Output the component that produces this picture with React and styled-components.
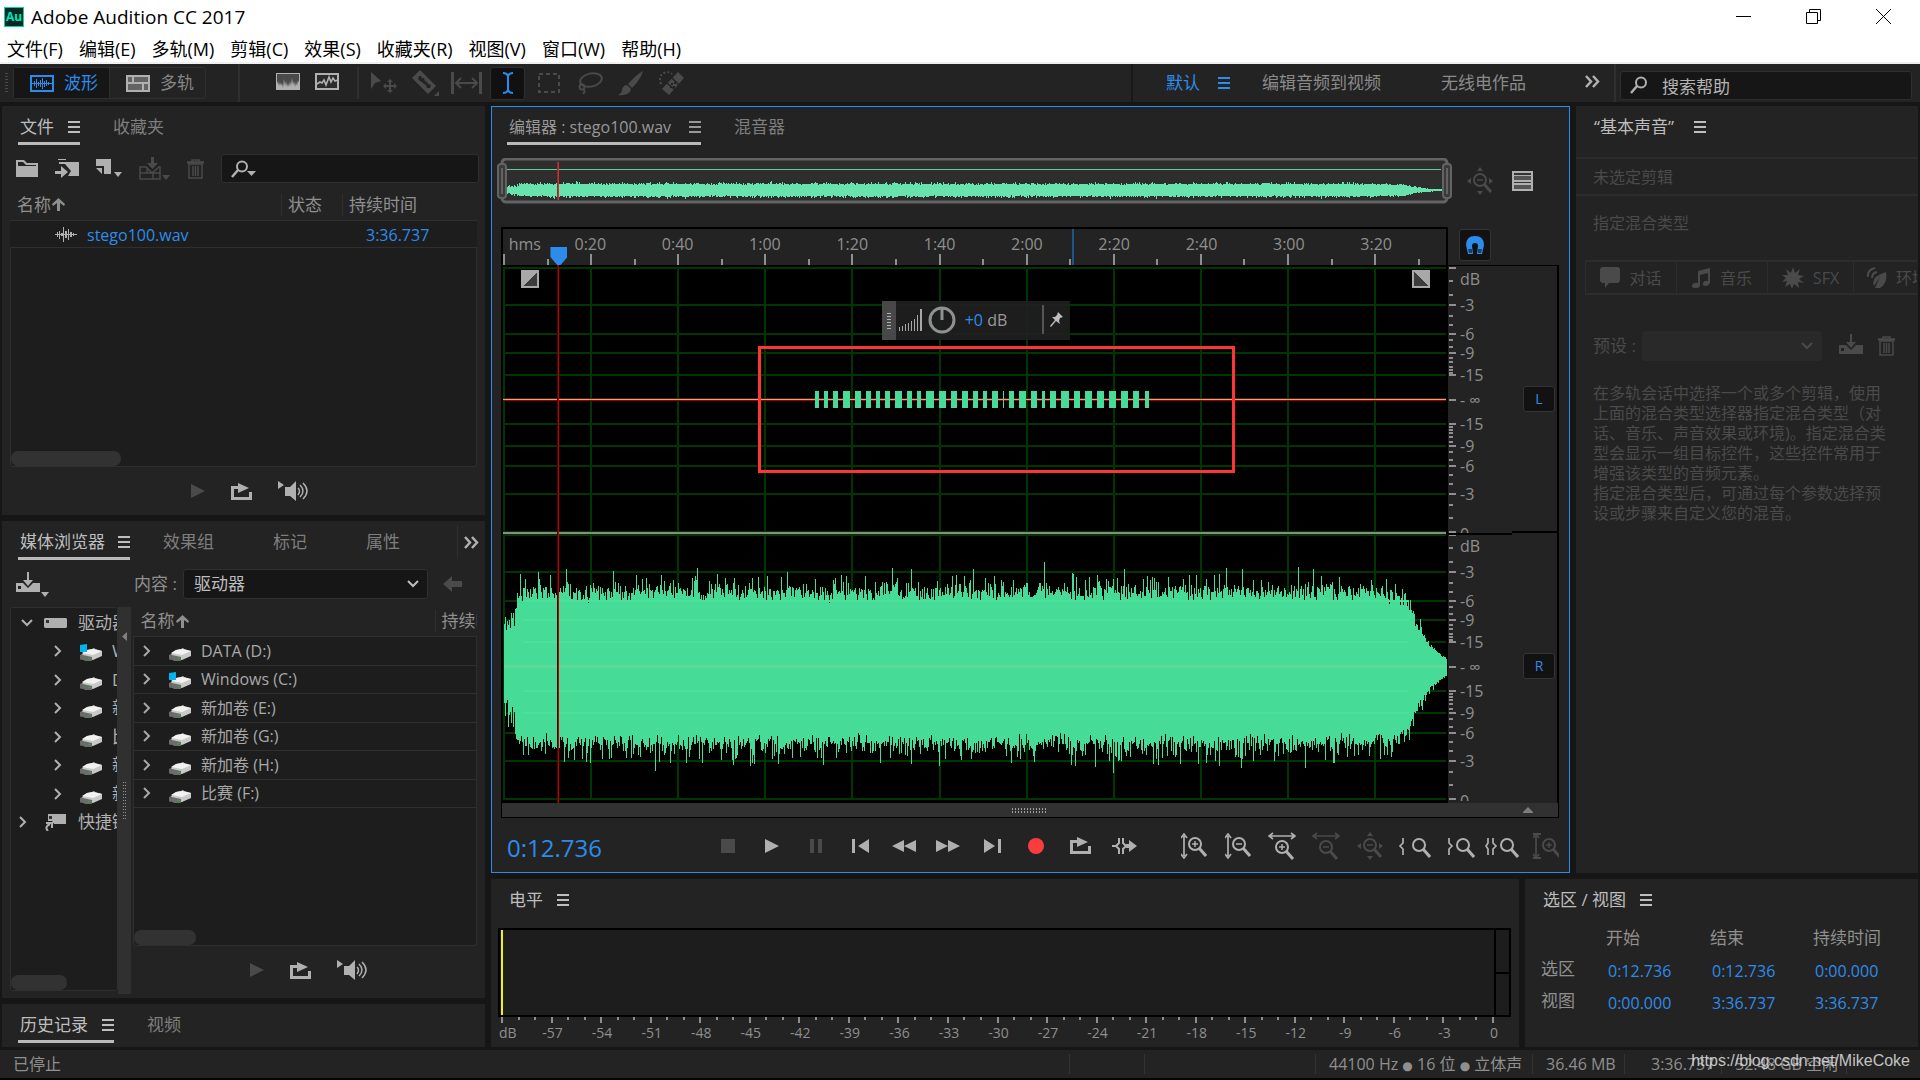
import React from "react";
import styled, { createGlobalStyle } from "styled-components";

const colors = {
  page: "#161616",
  panel: "#232323",
  well: "#1d1d1d",
  field: "#161616",
  line: "#2f2f2f",
  blue: "#2d8ceb",
  bright: "#bebebe",
  text: "#8f8f8f",
  icon: "#b0b0b0",
  off: "#4a4a4a",
  wave: "#46dc98",
  grid: "#003600",
};

const GlobalStyle = createGlobalStyle`
  * {
    box-sizing: border-box;
  }
  body {
    margin: 0;
    background: ${colors.page};
    font-family: "Open Sans", "Noto Sans CJK SC", sans-serif;
    font-size: 16px;
    line-height: 20px;
    color: ${colors.text};
  }
  button, input, select {
    font: inherit;
    color: inherit;
    border: none;
    background: none;
    padding: 0;
    margin: 0;
    outline: none;
  }
  svg {
    display: block;
    flex: none;
  }
`;

/* ---------- drawings ---------- */

const Icon = ({ w, h, children, color = "currentColor" }) => (
  <svg width={w} height={h} viewBox={`0 0 ${w} ${h}`} fill={color} aria-hidden="true">
    {children}
  </svg>
);

const MenuIcon = () => (
  <Icon w={12} h={12}>
    <path d="M0 0h12v2H0zM0 5h12v2H0zM0 10h12v2H0z" />
  </Icon>
);

const ChevronDown = () => (
  <Icon w={12} h={8}>
    <path d="M1 1l5 5 5-5" fill="none" stroke="currentColor" strokeWidth="2" />
  </Icon>
);

const ChevronRight = () => (
  <Icon w={8} h={12}>
    <path d="M1 1l5 5-5 5" fill="none" stroke="currentColor" strokeWidth="2" />
  </Icon>
);

const DoubleChevron = () => (
  <Icon w={15} h={13}>
    <path d="M1 1l5 5.500-5 5.500M8 1l5 5.500-5 5.500" fill="none" stroke="#b0b0b0" strokeWidth="2.500" />
  </Icon>
);

const WaveformIcon = () => (
  <Icon w={24} h={17}>
    <path d="M1 1h22v15H1z" fill="none" stroke="currentColor" strokeWidth="2" />
    <path d="M2 8h20v1H2zM4 6h1v5H4zM6 4h1v9H6zM8 7h1v4H8zM10 5h1v7h-1zM12 3h1v11h-1zM14 6h1v6h-1zM16 5h1v6h-1zM18 7h1v3h-1z" />
  </Icon>
);

const MultitrackIcon = () => (
  <Icon w={24} h={17}>
    <path d="M0 0h24v17H0z" fill="#b0b0b0" />
    <path d="M2 2h4v5H2zM8 2h14v5H8zM2 9h14v6H2zM18 9h4v6h-4z" fill="#636363" />
  </Icon>
);

const SpectralIcon = () => (
  <Icon w={24} h={17}>
    <path d="M0 0h24v17H0z" fill="#b0b0b0" />
    <path d="M1 1h22v9l-1-3-1 6-1-4-1 5-1-6-1 4-1-7-1 8-1-5-1 6-1-4-1 4-1-6-1 5-1-7-1 9-1-5-1 3-1-4-1 4-1-5-1 3z" fill="#4a4a4a" />
  </Icon>
);

const PitchIcon = () => (
  <Icon w={24} h={17}>
    <path d="M1 1h22v15H1z" fill="#2c2c2c" stroke="#b0b0b0" strokeWidth="2" />
    <path d="M2 11l3-2 2 1 2-3 2 5 3-8 2 5 2-4 2 3 3-1" fill="none" stroke="#b0b0b0" strokeWidth="1.600" />
  </Icon>
);

const MoveIcon = () => (
  <Icon w={27} h={22}>
    <path d="M0 0l10 9-6 2-4 6z" />
    <path d="M19 7l3 3h-2v3h3v-2l3 3-3 3v-2h-3v3h2l-3 3-3-3h2v-3h-3v2l-3-3 3-3v2h3v-3h-2z" />
  </Icon>
);

const RazorIcon = () => (
  <Icon w={28} h={27}>
    <path d="M8 0l16 16-8 8L0 8z" />
    <path d="M7 6l2 0 1 2 2 0 1 3 2 1 1 2 3 1-1 3-3 0-1-3-2-1-2-2-2-1-2-2z" fill={colors.panel} />
    <path d="M27 21v5h-5z" />
  </Icon>
);

const SlipIcon = () => (
  <Icon w={31} h={22}>
    <path d="M0 0h3v22H0zM28 0h3v22h-3z" />
    <path d="M6 11h19M10 6l-5 5 5 5M21 6l5 5-5 5" fill="none" stroke="currentColor" strokeWidth="2" />
  </Icon>
);

const IBeamIcon = () => (
  <Icon w={12} h={22}>
    <path d="M1 1q4 0 5 3 1-3 5-3M6 4v14M1 21q4 0 5-3 1 3 5 3" fill="none" stroke="currentColor" strokeWidth="2" />
  </Icon>
);

const MarqueeIcon = () => (
  <Icon w={22} h={20}>
    <path d="M1 1h20v18H1z" fill="none" stroke="currentColor" strokeWidth="2" strokeDasharray="4 3" />
  </Icon>
);

const LassoIcon = () => (
  <Icon w={26} h={22}>
    <g fill="none" stroke="currentColor" strokeWidth="2">
      <ellipse cx="14" cy="8" rx="11" ry="6.500" transform="rotate(-12 14 8)" />
      <circle cx="5" cy="15" r="2.500" />
      <path d="M6 17q3 2 0 5" />
    </g>
  </Icon>
);

const BrushIcon = () => (
  <Icon w={25} h={25}>
    <path d="M25 0q-2 8-11 17l-4-4Q19 3 25 0zM9 14l4 4q-1 7-13 6 4-2 4-5 1-5 5-5z" />
  </Icon>
);

const HealIcon = () => (
  <Icon w={26} h={25}>
    <path d="M19 1l6 6-15 17-7-6z" />
    <path d="M8 12l8 7M13 7l7 7" stroke={colors.panel} strokeWidth="1.500" />
    <path d="M12 12h2v2h-2zM14 15h2v2h-2zM15 11h2v2h-2zM11 15h2v2h-2z" fill={colors.panel} />
    <path d="M2 13Q-1 5 5 2q5-2 8 1" fill="none" stroke="currentColor" strokeWidth="2" strokeDasharray="2 2" />
  </Icon>
);

const SearchIcon = ({ arrow }) => (
  <Icon w={arrow ? 25 : 18} h={18}>
    <circle cx="11" cy="6.500" r="5" fill="none" stroke={colors.icon} strokeWidth="2" />
    <path d="M7 10l-6 7" stroke={colors.icon} strokeWidth="2.500" />
    {arrow && <path d="M16 11h9l-4.500 5z" fill={colors.icon} />}
  </Icon>
);

const FolderIcon = () => (
  <Icon w={22} h={17}>
    <path d="M0 0h8l3 3h11v14H0zM2 2v4h18V5H10L7 2z" fillRule="evenodd" />
  </Icon>
);

const ImportIcon = () => (
  <Icon w={24} h={19}>
    <path d="M3 0h8v1H3zM4 3h20v14H13l3-5-6-7H4z" />
    <path d="M0 12h6V7l7 6-7 6v-4H0z" />
  </Icon>
);

const NewFileIcon = () => (
  <Icon w={26} h={19}>
    <path d="M0 0h15v15H8V7H0zM0 9h6v6z" />
    <path d="M18 13h8l-4 5z" />
  </Icon>
);

const InsertIcon = () => (
  <Icon w={31} h={24}>
    <path d="M12 0h3v6h4l-5.500 6L8 6h4z" />
    <path d="M1 10h6l6 6 7-6h1v12H1zM1 16h20M8 10v6M14 16v6" fill="none" stroke="currentColor" strokeWidth="1.500" />
    <path d="M23 18h8l-4 5z" />
  </Icon>
);

const TrashIcon = () => (
  <Icon w={17} h={20}>
    <path d="M0 3h17v1H0zM5 3V1h7v2" fill="none" stroke="currentColor" strokeWidth="1.500" />
    <path d="M2 5h13v14H2zM6 7v10M8.500 7v10M11 7v10" fill="none" stroke="currentColor" strokeWidth="1.500" />
  </Icon>
);

const SortArrow = () => (
  <Icon w={13} h={13}>
    <path d="M6.500 0L13 6l-1 2-4-3v8H5V5L1 8 0 6z" />
  </Icon>
);

const ClipIcon = () => (
  <Icon w={22} h={17}>
    <path d="M0 8h22v1H0zM2 6h1v5H2zM4 5h1v8H4zM6 7h2v3H6zM8 1h1v15H8zM10 5h2v7h-2zM13 3h1v11h-1zM15 6h2v5h-2zM18 7h1v3h-1z" />
  </Icon>
);

const PlayIcon = () => (
  <Icon w={14} h={14}>
    <path d="M0 0l14 7-14 7z" />
  </Icon>
);

const LoopIcon = () => (
  <Icon w={21} h={17}>
    <path d="M0 3h7V0l11 5-11 5V6H3v8h15V9h3v8H0z" />
  </Icon>
);

const SpeakerIcon = () => (
  <Icon w={31} h={20}>
    <path d="M0 0l6 4-6 4zM7 6h5l6-6v20l-6-5H7z" />
    <path d="M20 7q3 3 0 7M22 4q6 6 0 12M25 2q8 8 0 16" fill="none" stroke="currentColor" strokeWidth="1.500" />
  </Icon>
);

const DriveArrowIcon = ({ arrow }) => (
  <Icon w={arrow ? 33 : 24} h={25}>
    <path d="M0 11h7l5 5 5-5h7v9H0z" />
    <path d="M11 0h2v8h4l-5 6-5-6h4z" />
    <path d="M2 14h3v3H2z" fill={colors.panel} />
    {arrow && <path d="M25 20h8l-4 5z" />}
  </Icon>
);

const BackArrow = () => (
  <Icon w={19} h={16}>
    <path d="M0 8l9-8v5h10v6H9v5z" />
  </Icon>
);

const HardDriveIcon = ({ system }) => (
  <Icon w={22} h={20}>
    <path d="M0 14l6-3v7l-5 1-1-1z" fill="#6a6a6a" />
    <path d="M2 13l5-4 5-1 2-1 1 1 7 2v5l-9 4-7-1z" fill="#c9c9c9" />
    <path d="M2 12l5-3 6-1 9 2-9 4z" fill="#f2f2f2" />
    <path d="M3 14l9 2v4H5l-3-2z" fill="#6c6c6c" />
    <path d="M8 17h3v1H8z" fill="#38a338" />
    {system && <path d="M0 4l7-1v8H0z" fill="#00b4f0" />}
  </Icon>
);

const DriveRootIcon = () => (
  <Icon w={23} h={10}>
    <path d="M1 0h21l1 1v8l-1 1H1L0 9V1z" fill={colors.icon} />
    <path d="M2 2h3v3H2z" fill="#333" />
  </Icon>
);

const ShortcutIcon = () => (
  <Icon w={23} h={17}>
    <path d="M3 0h18v10H9L7 7H3z" fill={colors.icon} />
    <path d="M4 2h3v3H4z" fill="#333" />
    <path d="M3 17q-4-4 2-7M1 9h6v5" fill="none" stroke={colors.icon} strokeWidth="2" />
  </Icon>
);

const Lens = ({ x, y, sign }) => (
  <g fill="none" stroke="currentColor">
    <circle cx={x} cy={y} r="6" strokeWidth="2" />
    <path d={`M${x + 4} ${y + 4}l7 8`} strokeWidth="3" />
    {sign && <path d={`M${x - 3} ${y}h6`} strokeWidth="1.500" />}
    {sign === "+" && <path d={`M${x} ${y - 3}v6`} strokeWidth="1.500" />}
  </g>
);

const ZoomVertical = ({ sign, bars }) => (
  <Icon w={26} h={26}>
    <path d="M3 3v20M0 5l3-4 3 4M0 21l3 4 3-4" fill="none" stroke="currentColor" strokeWidth="1.700" />
    {bars && <path d="M0 1h8M0 25h8" stroke="currentColor" strokeWidth="2" />}
    <Lens x={bars ? 16 : 14} y={bars ? 12 : 11} sign={sign} />
  </Icon>
);

const ZoomHorizontal = ({ sign }) => (
  <Icon w={28} h={28}>
    <path d="M1 4h26M5 1L1 4l4 3M23 1l4 3-4 3" fill="none" stroke="currentColor" strokeWidth="1.700" />
    <Lens x={14} y={15} sign={sign} />
  </Icon>
);

const ZoomFull = () => (
  <Icon w={26} h={28}>
    <path d="M10 4l3-4 3 4zM10 24l3 4 3-4zM4 11v6l-4-3zM22 11v6l4-3z" />
    <Lens x={13} y={13} sign="-" />
  </Icon>
);

const ZoomEdge = ({ left, right }) => (
  <Icon w={34} h={24}>
    {left && <path d={right ? "M3 4v5l-2 3 2 3v6" : "M6 4v5l-3 3 3 3v6"} fill="none" stroke="currentColor" strokeWidth="1.700" />}
    {right && <path d="M8 4v5l3 3-3 3v6" fill="none" stroke="currentColor" strokeWidth="1.700" />}
    <Lens x={22} y={11} />
  </Icon>
);

const ListIcon = () => (
  <Icon w={21} h={20} color={colors.icon}>
    <path d="M0 0h21v20H0z" />
    <path d="M2 2h17v2H2zM2 11h17v1H2z" fill="#333" />
    <path d="M2 5h17v4H2zM2 14h17v4H2z" fill="#555" />
  </Icon>
);

const MagnetIcon = () => (
  <Icon w={18} h={19}>
    <path d="M2 18L0 9q0-9 9-9t9 9l-2 9h-5l1-8q0-3-3-3T6 10l1 8z" />
    <path d="M2 13h4v4H3zM12 13h4l-1 4h-3z" fill="#17406b" />
  </Icon>
);

const stopShape = <Icon w={14} h={14}><path d="M0 0h14v14H0z" /></Icon>;
const pauseShape = <Icon w={12} h={14}><path d="M0 0h4v14H0zM8 0h4v14H8z" /></Icon>;
const toStartShape = <Icon w={17} h={14}><path d="M0 0h3v14H0zM17 0v14L6 7z" /></Icon>;
const toEndShape = <Icon w={17} h={14}><path d="M14 0h3v14h-3zM0 0v14l11-7z" /></Icon>;
const rewindShape = <Icon w={24} h={12}><path d="M12 0v12L0 6zM24 0v12L12 6z" /></Icon>;
const forwardShape = <Icon w={24} h={12}><path d="M12 0v12l12-6zM0 0v12l12-6z" /></Icon>;
const recordShape = <Icon w={16} h={16} color="#f93d3d"><circle cx="8" cy="8" r="8" /></Icon>;
const skipShape = (
  <Icon w={25} h={16}>
    <path d="M7 0v5L4 8l3 3v5M11 0v5l3 3-3 3v5M0 8h5" fill="none" stroke="currentColor" strokeWidth="2" />
    <path d="M14 6h3V2l8 6-8 6v-4h-3z" />
  </Icon>
);

/* ---------- shared parts ---------- */

const Panel = styled.section`
  display: flex;
  flex-direction: column;
  background: ${colors.panel};
  min-width: 0;
  overflow: hidden;
  flex: ${(p) => p.$flex || "none"};
  width: ${(p) => p.$width || "auto"};
  height: ${(p) => p.$height || "auto"};
  outline: ${(p) => (p.$focused ? `1px solid ${colors.blue}` : "none")};
  outline-offset: -1px;
`;

const TabRow = styled.div`
  display: flex;
  flex: none;
  height: 39px;
  padding-left: 16px;
  gap: 31px;
`;

const TabButton = styled.button`
  display: flex;
  align-items: center;
  gap: ${(p) => p.$gap || "14px"};
  height: 39px;
  padding: 6px 0 0 2px;
  padding-right: ${(p) => (p.$active ? "0" : "26px")};
  font-size: ${(p) => p.$size || "17px"};
  white-space: nowrap;
  color: ${(p) => (p.$active ? p.$color || colors.bright : "#7e7e7e")};
  border-bottom: 3px solid ${(p) => (p.$line ? "#bababa" : "transparent")};
`;

const TabsEnd = styled.button`
  margin-left: auto;
  display: flex;
  align-items: center;
  justify-content: flex-end;
  width: 60px;
  height: 34px;
  margin-top: 4px;
  padding-right: 6px;
  border-left: 1px solid ${colors.line};
`;

const IconButton = styled.button`
  display: flex;
  align-items: center;
  justify-content: center;
  color: ${(p) => (p.$off ? colors.off : colors.icon)};
`;

const Preview = styled.div`
  display: flex;
  align-items: center;
  justify-content: center;
  flex: none;
  gap: 26px;
  height: 48px;
  padding-left: ${(p) => p.$shift || "0"};
`;

const Tab = ({ children, active, line = active, gap }) => (
  <TabButton type="button" $active={active} $line={line} $gap={gap}>
    {children}
    {active && <MenuIcon />}
  </TabButton>
);

const PreviewControls = ({ shift }) => (
  <Preview $shift={shift}>
    <IconButton $off aria-label="播放"><PlayIcon /></IconButton>
    <IconButton aria-label="循环"><LoopIcon /></IconButton>
    <IconButton aria-label="自动播放"><SpeakerIcon /></IconButton>
  </Preview>
);

/* ---------- title, menu and tool bars ---------- */

const TitleBar = styled.header`
  display: flex;
  align-items: center;
  height: 35px;
  padding: 0 16px 2px 4px;
  background: #fff;
  color: #000;
  font-size: 19px;
`;

const Logo = styled.span`
  width: 20px;
  height: 20px;
  margin-right: 7px;
  border: 1px solid #00d8a8;
  background: #052822;
  color: #00e4bb;
  font-size: 12px;
  line-height: 17px;
  font-weight: 700;
  text-align: center;
`;

const WindowButtons = styled.div`
  display: flex;
  gap: 50px;
  margin-left: auto;
  padding-right: 11px;
`;

const WindowButton = styled.button`
  display: flex;
  width: 20px;
  justify-content: center;
`;

const MenuBar = styled.nav`
  display: flex;
  gap: 16px;
  height: 29px;
  padding-left: 7px;
  background: #fff;
  border-bottom: 2px solid #f0f0f0;
`;

const MenuItem = styled.button`
  color: #000;
  font-size: 18px;
  white-space: nowrap;
`;

const ToolBar = styled.div`
  display: flex;
  align-items: center;
  flex: none;
  height: 38px;
  margin-bottom: 4px;
  padding-left: 5px;
  background: ${colors.panel};
`;

const Grip = styled.span`
  width: 3px;
  height: 20px;
  margin-right: 5px;
  background: repeating-linear-gradient(#4a4a4a 0 1px, transparent 1px 3px);
`;

const ModeGroup = styled.div`
  display: flex;
  height: 32px;
  border: 1px solid ${colors.line};
  border-radius: 3px;
`;

const ModeButton = styled.button`
  display: flex;
  align-items: center;
  gap: 10px;
  width: 95px;
  padding-left: 16px;
  font-size: 17px;
  background: ${(p) => (p.$active ? colors.field : "transparent")};
  color: ${(p) => (p.$active ? colors.blue : "#868686")};
`;

const BarLine = styled.span`
  width: ${(p) => p.$width || "2px"};
  height: ${(p) => p.$height || "38px"};
  background: ${(p) => p.$color || "#2f2f2f"};
  margin: ${(p) => p.$margin || "0"};
`;

const ViewToggles = styled.div`
  display: flex;
  gap: 15px;
  padding: 0 18px 4px 36px;
`;

const ToolGroup = styled.div`
  display: flex;
  gap: 6px;
  padding-left: 8px;
`;

const ToolButton = styled.button`
  display: flex;
  align-items: center;
  justify-content: center;
  width: 35px;
  height: 33px;
  border: 1px solid ${(p) => (p.$active ? colors.line : "transparent")};
  border-radius: 3px;
  background: ${(p) => (p.$active ? "#111" : "transparent")};
  color: ${(p) => (p.$active ? colors.blue : colors.off)};
`;

const Workspaces = styled.nav`
  display: flex;
  align-items: center;
  width: 483px;
  height: 38px;
  margin-left: auto;
  padding: 0 14px 0 33px;
  border-left: 2px solid #181818;
`;

const WorkspaceButton = styled.button`
  display: flex;
  align-items: center;
  gap: 18px;
  margin-right: ${(p) => p.$after || "0"};
  font-size: 17px;
  color: ${(p) => (p.$active ? colors.blue : "#8a8a8a")};
`;

const MoreButton = styled.button`
  margin-left: auto;
  padding-bottom: 4px;
`;

const SearchBox = styled.label`
  display: flex;
  align-items: center;
  gap: 14px;
  flex: ${(p) => (p.$width ? "none" : "1")};
  width: ${(p) => p.$width || "auto"};
  min-width: 0;
  height: 29px;
  margin: ${(p) => p.$margin || "0"};
  padding-left: 9px;
  background: ${colors.field};
  border: 1px solid ${colors.line};
  border-radius: 3px;
`;

const SearchInput = styled.input`
  flex: 1;
  min-width: 0;
  padding-top: 3px;
  font-size: 17px;
  &::placeholder {
    color: #b4b4b4;
    opacity: 1;
  }
`;

const menus = ["文件(F)", "编辑(E)", "多轨(M)", "剪辑(C)", "效果(S)", "收藏夹(R)", "视图(V)", "窗口(W)", "帮助(H)"];

const tools = [
  ["移动", <MoveIcon />],
  ["切断", <RazorIcon />],
  ["滑动", <SlipIcon />],
  ["时间选择", <IBeamIcon />],
  ["框选", <MarqueeIcon />],
  ["套索", <LassoIcon />],
  ["画笔", <BrushIcon />],
  ["污点修复", <HealIcon />],
];

const TopBars = () => (
  <>
    <TitleBar>
      <Logo>Au</Logo>
      Adobe Audition CC 2017
      <WindowButtons>
        <WindowButton aria-label="最小化">
          <Icon w={15} h={15}><path d="M0 7h15v1H0z" /></Icon>
        </WindowButton>
        <WindowButton aria-label="还原">
          <Icon w={15} h={15}>
            <path d="M0.500 3.500h11v11h-11zM3.500 3.500v-3h11v11h-3" fill="none" stroke="#000" />
          </Icon>
        </WindowButton>
        <WindowButton aria-label="关闭">
          <Icon w={15} h={15}><path d="M0 0l15 15M15 0L0 15" stroke="#000" /></Icon>
        </WindowButton>
      </WindowButtons>
    </TitleBar>
    <MenuBar>
      {menus.map((m) => <MenuItem key={m}>{m}</MenuItem>)}
    </MenuBar>
    <ToolBar>
      <Grip />
      <ModeGroup>
        <ModeButton $active><WaveformIcon />波形</ModeButton>
        <BarLine $width="1px" $height="30px" />
        <ModeButton><MultitrackIcon />多轨</ModeButton>
      </ModeGroup>
      <BarLine $margin="0 0 0 32px" />
      <ViewToggles>
        <IconButton aria-label="频谱"><SpectralIcon /></IconButton>
        <IconButton aria-label="音高"><PitchIcon /></IconButton>
      </ViewToggles>
      <BarLine $height="32px" />
      <ToolGroup>
        {tools.map(([name, icon], i) => (
          <ToolButton key={name} aria-label={name} $active={i === 3}>{icon}</ToolButton>
        ))}
      </ToolGroup>
      <Workspaces>
        <WorkspaceButton $active $after="32px">默认<MenuIcon /></WorkspaceButton>
        <WorkspaceButton $after="60px">编辑音频到视频</WorkspaceButton>
        <WorkspaceButton>无线电作品</WorkspaceButton>
        <MoreButton aria-label="更多"><DoubleChevron /></MoreButton>
      </Workspaces>
      <BarLine />
      <SearchBox $width="292px" $margin="4px 8px 0 4px">
        <SearchIcon />
        <SearchInput aria-label="搜索帮助" placeholder="搜索帮助" />
      </SearchBox>
    </ToolBar>
  </>
);

/* ---------- left column ---------- */

const LeftColumn = styled.div`
  display: flex;
  flex-direction: column;
  gap: 6px;
  width: 483px;
  flex: none;
`;

const FileTools = styled.div`
  display: flex;
  align-items: center;
  gap: 17px;
  flex: none;
  height: 29px;
  margin: 9px 6px 7px 14px;
`;

const Table = styled.table`
  width: 100%;
  flex: none;
  table-layout: fixed;
  border-collapse: collapse;
`;

const Th = styled.th`
  width: ${(p) => p.$width || "auto"};
  height: ${(p) => p.$height || "29px"};
  padding: 0 0 0 7px;
  text-align: left;
  font-weight: 400;
  font-size: 17px;
  overflow: hidden;
  white-space: nowrap;
  background: linear-gradient(${colors.line}, ${colors.line}) 0 50% / ${(p) => (p.$first ? "0" : "1px")} 22px no-repeat;
`;

const Sorted = styled.span`
  display: flex;
  align-items: center;
  gap: 1px;
`;

const FileList = styled.div`
  display: flex;
  flex-direction: column;
  flex: 1;
  margin: 0 8px;
`;

const Td = styled.td`
  height: 27px;
  padding: 2px 0 0 ${(p) => p.$left};
  background: ${colors.well};
  border-top: 1px solid ${colors.line};
  border-bottom: 1px solid ${colors.line};
  color: ${colors.blue};
`;

const CellLine = styled.span`
  display: flex;
  align-items: center;
  gap: 10px;
  color: ${colors.icon};
`;

const BlueText = styled.span`
  color: ${colors.blue};
`;

const Well = styled.div`
  display: flex;
  align-items: flex-end;
  flex: 1;
  background: ${colors.well};
  border: 1px solid ${colors.line};
  border-top: none;
  border-radius: 0 0 3px 3px;
`;

const Thumb = styled.span`
  width: ${(p) => p.$width};
  height: 15px;
  border-radius: 7px;
  background: #323232;
`;

const MediaTools = styled.div`
  display: flex;
  align-items: center;
  flex: none;
  height: 30px;
  margin: 9px 0 8px;
  padding-left: 14px;
`;

const FieldLabel = styled.label`
  width: ${(p) => p.$width};
  margin-left: ${(p) => p.$left || "0"};
  font-size: 17px;
  white-space: nowrap;
`;

const SelectBox = styled.span`
  display: flex;
  align-items: center;
  width: ${(p) => p.$width};
  height: 30px;
  padding: 0 8px 0 10px;
  margin-right: 15px;
  border: 1px solid ${(p) => (p.$off ? "#292929" : colors.line)};
  border-radius: 3px;
  background: ${(p) => (p.$off ? "#292929" : colors.field)};
  color: ${(p) => (p.$off ? colors.off : colors.bright)};
`;

const Select = styled.select`
  appearance: none;
  flex: 1;
  font-size: 17px;
`;

const MediaBody = styled.div`
  display: flex;
  flex: 1;
  min-height: 0;
  padding-left: 8px;
`;

const TreeBox = styled.div`
  display: flex;
  flex-direction: column;
  width: 108px;
  margin-bottom: 7px;
  overflow: hidden;
  background: ${colors.well};
  border: 1px solid ${colors.line};
  border-radius: 3px;
`;

const TreeRow = styled.div`
  display: flex;
  align-items: center;
  flex: none;
  height: 28px;
  gap: ${(p) => p.$gap || "11px"};
  padding-left: ${(p) => p.$indent || "10px"};
  color: ${colors.icon};
  white-space: nowrap;
  &:nth-child(odd) {
    height: 29px;
  }
`;

const TreeName = styled.span`
  margin-left: ${(p) => p.$pull || "0"};
  font-size: 17px;
`;

const ThumbLine = styled.div`
  display: flex;
  margin-top: auto;
`;

const Splitter = styled.div`
  display: flex;
  flex-direction: column;
  align-items: center;
  width: 13px;
  margin: 0 2px 4px 0;
  padding-top: 25px;
  background: #303030;
  color: #808080;
`;

const SplitGrip = styled.span`
  width: 5px;
  height: 37px;
  margin-top: 141px;
  background: repeating-linear-gradient(90deg, #303030 0 1px, transparent 1px 2px),
    repeating-linear-gradient(#909090 0 1px, transparent 1px 3px);
`;

const DriveColumn = styled.div`
  display: flex;
  flex-direction: column;
  flex: 1;
  min-width: 0;
  padding-bottom: 4px;
`;

const DriveList = styled.div`
  display: flex;
  flex-direction: column;
  flex: 1;
  margin-right: 8px;
`;

const DriveRow = styled.tr`
  height: 28px;
  &:nth-child(odd) {
    height: 29px;
  }
`;

const DriveCell = styled.td`
  padding: 0 0 0 9px;
  background: ${colors.well};
  border: 1px solid ${colors.line};
  color: #a8a8a8;
`;

const DriveLine = styled.span`
  display: flex;
  align-items: center;
  gap: 18px;
`;

const DriveName = styled.span`
  margin-left: -8px;
`;

const drives = [
  ["DATA (D:)"],
  ["Windows (C:)", true],
  ["新加卷 (E:)"],
  ["新加卷 (G:)"],
  ["新加卷 (H:)"],
  ["比赛 (F:)"],
];

const tree = [
  ["Windows (C:)", true],
  ["DATA (D:)"],
  ["新加卷 (E:)"],
  ["比赛 (F:)"],
  ["新加卷 (G:)"],
  ["新加卷 (H:)"],
];

const FilesPanel = () => (
  <Panel $height="409px">
    <TabRow>
      <Tab active>文件</Tab>
      <Tab>收藏夹</Tab>
    </TabRow>
    <FileTools>
      <IconButton aria-label="打开"><FolderIcon /></IconButton>
      <IconButton aria-label="导入"><ImportIcon /></IconButton>
      <IconButton aria-label="新建"><NewFileIcon /></IconButton>
      <IconButton $off aria-label="插入"><InsertIcon /></IconButton>
      <IconButton $off aria-label="删除"><TrashIcon /></IconButton>
      <SearchBox>
        <SearchIcon arrow />
        <SearchInput aria-label="搜索文件" />
      </SearchBox>
    </FileTools>
    <FileList>
      <Table>
        <thead>
          <tr>
            <Th $first $width="271px" $height="30px"><Sorted>名称<SortArrow /></Sorted></Th>
            <Th $width="61px">状态</Th>
            <Th>持续时间</Th>
          </tr>
        </thead>
        <tbody>
          <tr>
            <Td $left="45px"><CellLine><ClipIcon /><BlueText>stego100.wav</BlueText></CellLine></Td>
            <Td $left="0" />
            <Td $left="24px">3:36.737</Td>
          </tr>
        </tbody>
      </Table>
      <Well><Thumb $width="110px" /></Well>
    </FileList>
    <PreviewControls shift="12px" />
  </Panel>
);

const MediaPanel = () => (
  <Panel $flex="1">
    <TabRow>
      <Tab active gap="13px">媒体浏览器</Tab>
      <Tab>效果组</Tab>
      <Tab>标记</Tab>
      <Tab>属性</Tab>
      <TabsEnd aria-label="更多"><DoubleChevron /></TabsEnd>
    </TabRow>
    <MediaTools>
      <IconButton aria-label="添加快捷方式"><DriveArrowIcon arrow /></IconButton>
      <FieldLabel htmlFor="drive-content" $width="49px" $left="85px">内容 :</FieldLabel>
      <SelectBox $width="245px">
        <Select id="drive-content" defaultValue="驱动器">
          <option>驱动器</option>
        </Select>
        <ChevronDown />
      </SelectBox>
      <IconButton $off aria-label="后退"><BackArrow /></IconButton>
    </MediaTools>
    <MediaBody>
      <TreeBox>
        <TreeRow><ChevronDown /><DriveRootIcon /><TreeName>驱动器</TreeName></TreeRow>
        {tree.map(([name, system]) => (
          <TreeRow key={name} $indent="43px" $gap="18px">
            <ChevronRight />
            <HardDriveIcon system={system} />
            <TreeName $pull="-8px">{name}</TreeName>
          </TreeRow>
        ))}
        <TreeRow $indent="8px" $gap="18px">
          <ChevronRight />
          <ShortcutIcon />
          <TreeName $pull="-8px">快捷键</TreeName>
        </TreeRow>
        <ThumbLine><Thumb $width="56px" /></ThumbLine>
      </TreeBox>
      <Splitter>
        <Icon w={5} h={9}><path d="M5 0v9L0 4.500z" /></Icon>
        <SplitGrip />
      </Splitter>
      <DriveColumn>
        <DriveList>
          <Table>
            <thead>
              <tr>
                <Th $first $width="301px"><Sorted>名称<SortArrow /></Sorted></Th>
                <Th>持续时间</Th>
              </tr>
            </thead>
            <tbody>
              {drives.map(([name, system]) => (
                <DriveRow key={name}>
                  <DriveCell colSpan={2}>
                    <DriveLine>
                      <ChevronRight />
                      <HardDriveIcon system={system} />
                      <DriveName>{name}</DriveName>
                    </DriveLine>
                  </DriveCell>
                </DriveRow>
              ))}
            </tbody>
          </Table>
          <Well><Thumb $width="62px" /></Well>
        </DriveList>
        <PreviewControls />
      </DriveColumn>
    </MediaBody>
  </Panel>
);

/* ---------- editor ---------- */

const TOTAL = 216.737;
const CURSOR = 12.736;
const WAVE_W = 947;
const WAVE_H = 538;
const timeX = (s) => 3 + (s * 944) / TOTAL;

const makeNoise = (seed) => {
  let s = seed;
  return () => {
    s = (s * 16807) % 2147483647;
    return s / 2147483647;
  };
};

// loudness of the right channel along the clip, 0..1
const envelope = (x) => {
  if (x < 18) return 0.55 + x * 0.025;
  if (x < 880) return 1;
  if (x < 908) return 1 - (x - 880) * 0.005;
  if (x < 914) return 0.86 - (x - 908) * 0.045;
  if (x < 930) return 0.59 - (x - 914) * 0.02;
  return Math.max(0.1, 0.27 - (x - 930) * 0.01);
};

const noisePath = (width, centre, base, spread, seed) => {
  const rnd = makeNoise(seed);
  let d = "";
  for (let x = 3; x < width; x += 1) {
    const at = (x * WAVE_W) / width;
    const env = envelope(at);
    const peak = () => {
      const body = base + (rnd() + rnd()) * spread * 0.5;
      const burst = rnd() ** 6 * spread + (rnd() > 0.994 ? spread * 0.7 : 0);
      const ragged = at < 16 ? 0.6 + rnd() * 0.4 : 1;
      return (body + burst) * env * ragged;
    };
    const up = peak();
    const down = peak() * 1.03;
    d += `M${x} ${(centre - up).toFixed(1)}h1v${(up + down).toFixed(1)}h-1z`;
  }
  return d;
};

const wavePath = noisePath(WAVE_W - 1, 402, 63, 21, 4711);
const overviewPath = noisePath(940, 32, 5, 2, 99);

// tone bursts in the left channel: [start, width]
const bursts = [
  [314, 4], [323, 4], [332, 5], [342, 7], [354, 6], [365, 5], [375, 4], [384, 5],
  [394, 7], [406, 5], [416, 4], [425, 8], [438, 7], [450, 6], [461, 6], [472, 5],
  [482, 4], [491, 6], [502, 1], [508, 5], [518, 7], [530, 6], [541, 3], [549, 6],
  [560, 8], [573, 6], [584, 7], [596, 7], [608, 7], [620, 7], [632, 6], [644, 4],
];

const majorTicks = [
  [3, ""], [40, "-3"], [69, "-6"], [88, "-9"], [110, "-15"], [135, "- ∞"],
  [159, "-15"], [181, "-9"], [201, "-6"], [229, "-3"], [267, "0"],
];
const minorTicks = [16, 30, 51, 60, 75, 82, 93, 97, 102, 105, 108, 162, 165, 168, 172, 177, 187, 195, 210, 219, 240, 253];
const channelTops = [0, 267];

const Overview = styled.div`
  display: flex;
  align-items: center;
  flex: none;
  height: 46px;
  margin: 13px 37px 23px 6px;
`;

const Stretch = styled.svg`
  flex: 1 1 0;
  min-width: 0;
  width: 100%;
  height: ${(p) => p.$height || "100%"};
`;

const OverviewButtons = styled.div`
  display: flex;
  align-items: center;
  gap: 19px;
  padding-left: 14px;
`;

const RulerRow = styled.div`
  display: flex;
  flex: none;
  height: 38px;
  margin: 0 11px 0 10px;
`;

const Ruler = styled.div`
  position: relative;
  display: flex;
  flex-direction: column;
  flex: 1;
  min-width: 0;
  border: 2px solid #000;
  border-bottom: none;
`;

const RulerLabels = styled.div`
  display: flex;
  flex: none;
  height: 25px;
  padding-top: 5px;
  text-align: center;
`;

const RulerLabel = styled.span`
  flex: ${(p) => p.$span} 1 0;
  width: 0;
`;

const Head = styled.span`
  position: absolute;
  top: 18px;
  width: 17px;
  height: 18px;
  margin-left: -8px;
  background: ${colors.blue};
  clip-path: polygon(0 0, 100% 0, 100% 55%, 60% 100%, 40% 100%, 0 55%);
`;

const Mark = styled.span`
  position: absolute;
  top: 0;
  bottom: 0;
  width: 2px;
  margin-left: -1px;
  background: #1f5488;
`;

const RulerSide = styled.div`
  width: 111px;
  flex: none;
  padding: 2px 0 0 11px;
`;

const SquareButton = styled.button`
  display: flex;
  align-items: center;
  justify-content: center;
  width: 32px;
  height: ${(p) => p.$height || "26px"};
  border: 1px solid #333;
  border-radius: 3px;
  background: #121212;
  color: ${colors.blue};
  font-size: 14px;
`;

const WaveRow = styled.div`
  display: flex;
  flex: 1;
  min-height: 0;
  margin: 0 11px 0 10px;
`;

const WaveArea = styled.div`
  position: relative;
  display: flex;
  flex: 1;
  min-width: 0;
  background: #000;
`;

const Hud = styled.div`
  position: absolute;
  left: 40.2%;
  top: 36px;
  display: flex;
  align-items: center;
  width: 188px;
  height: 39px;
  padding-bottom: 2px;
  background: rgba(32, 32, 32, 0.92);
`;

const HudGrip = styled.span`
  display: flex;
  align-items: center;
  align-self: flex-start;
  justify-content: center;
  flex: none;
  width: 14px;
  height: 39px;
  margin-right: 3px;
  background: #484848;
`;

const HudGain = styled.span`
  width: 77px;
  margin-left: 8px;
  color: #9a9a9a;
`;

const Scale = styled.div`
  display: flex;
  flex: none;
  width: 111px;
  border: 2px solid #000;
  border-width: 1px 2px 0 0;
`;

const ScaleLabel = styled.text`
  font-size: 16px;
  fill: ${colors.text};
`;

const ChannelButtons = styled.div`
  display: flex;
  flex-direction: column;
  flex: 1;
`;

const ChannelCell = styled.div`
  display: flex;
  flex: 1;
  align-items: center;
  justify-content: flex-end;
  padding-right: 2px;
  & + & {
    border-top: 2px solid #000;
    padding-bottom: 5px;
  }
`;

const Strip = styled.div`
  display: flex;
  align-items: center;
  flex: none;
  height: 15px;
  margin: 0 11px 0 10px;
  padding: 0 25px 0 35px;
  background: #313131;
  border: 1px solid #000;
  border-top: none;
  color: #7d7d7d;
`;

const StripGrip = styled.span`
  width: 36px;
  height: 5px;
  margin: 0 auto;
  background: linear-gradient(#313131, #313131) 0 2px / 100% 1px no-repeat,
    repeating-linear-gradient(90deg, #a0a0a0 0 1px, #313131 1px 3px);
`;

const Transport = styled.div`
  display: flex;
  align-items: center;
  flex: none;
  height: 55px;
  padding-left: 16px;
`;

const Clock = styled.span`
  width: 199px;
  padding-top: 4px;
  font-size: 24px;
  color: ${colors.blue};
`;

const TransportButton = styled(IconButton)`
  width: 44px;
  height: 32px;
`;

const ZoomGroup = styled.div`
  display: flex;
  margin-left: 26px;
`;

const WaveGraph = () => (
  <Stretch viewBox={`0 0 ${WAVE_W} ${WAVE_H}`} preserveAspectRatio="none" shapeRendering="crispEdges" role="img" aria-label="stego100.wav">
    {channelTops.map((top) => (
      <g key={top}>
        {majorTicks.map(([y], i) => (
          <rect key={i} x="2" y={y + top - 1} width="943" height="2" fill={colors.grid} />
        ))}
      </g>
    ))}
    {[0, 20, 40, 60, 80, 100, 120, 140, 160, 180, 200].map((s) => (
      <rect key={s} x={Math.round(timeX(s)) - 1} y="3" width="2" height="531" fill={colors.grid} />
    ))}
    <path d={wavePath} fill={colors.wave} />
    {[336, 355, 377, 426, 448].map((y) => (
      <rect key={y} x="22" y={y - 1} width="886" height="2" fill="#48e29b" />
    ))}
    <rect x="3" y="400" width="943" height="3" fill="#5fd996" />
    <rect x="2" y="133" width="943" height="3" fill="#9a0000" />
    <rect x="2" y="134" width="943" height="1" fill="#a0c48c" />
    {bursts.map(([x, w]) => (
      <rect key={x} x={x} y="126" width={w} height="17" fill={colors.wave} />
    ))}
    <rect x="2" y="267" width="943" height="2" fill="#8a8a8a" />
    <rect x={Math.round(timeX(CURSOR)) - 1} y="0" width="1" height={WAVE_H} fill="#c00000" />
    <rect x={Math.round(timeX(CURSOR)) - 2} y="0" width="1" height={WAVE_H} fill="#5a0000" />
    <path d="M20 5h18v18H20z" fill="#a8a8a8" />
    <path d="M36 7v14H22z" fill="#3c3c3c" />
    <path d="M911 5h18v18h-18z" fill="#a8a8a8" />
    <path d="M913 7v14h14z" fill="#3c3c3c" />
    <rect x="258" y="82" width="474" height="124" fill="none" stroke="#ff3434" strokeWidth="3" />
  </Stretch>
);

const ScaleGraph = () => (
  <svg width="64" height="537" viewBox="0 0 64 537" shapeRendering="crispEdges">
    {channelTops.map((top) => (
      <g key={top} transform={`translate(0 ${top})`}>
        {majorTicks.map(([y], i) => <rect key={i} x="1" y={y - 2} width="7" height="2" fill={colors.text} />)}
        {minorTicks.map((y) => <rect key={y} x="1" y={y - 2} width="4" height="2" fill={colors.text} />)}
        <ScaleLabel x="12" y="19">dB</ScaleLabel>
        {majorTicks.slice(1, 10).map(([y, label], i) => (
          <ScaleLabel key={i} x="12" y={y + 5}>{label}</ScaleLabel>
        ))}
      </g>
    ))}
    <svg y="256" width="64" height="11"><ScaleLabel x="12" y="18">0</ScaleLabel></svg>
    <svg y="523" width="64" height="12"><ScaleLabel x="12" y="18">0</ScaleLabel></svg>
    <path d="M0 267h64v2H0z" fill="#000" />
  </svg>
);

const OverviewGraph = () => (
  <Stretch viewBox="0 0 956 46" preserveAspectRatio="none" role="img" aria-label="概览">
    <rect x="5" y="1" width="945" height="43" rx="4" fill="#2e2e2e" stroke="#636363" strokeWidth="3" />
    <path d={overviewPath} fill="#68e3ab" transform="translate(6 0)" shapeRendering="crispEdges" />
    <rect x="10" y="11" width="934" height="1" fill="#62c99b" />
    <rect x="60" y="4" width="1" height="38" fill="#8f2c2c" />
    <rect x="61" y="4" width="1" height="38" fill="#d22f2f" />
    <g fill="#3a3a3a" stroke="#636363" strokeWidth="2">
      <rect x="1" y="6" width="8" height="34" rx="3" />
      <rect x="946" y="6" width="8" height="34" rx="3" />
    </g>
    <path d="M5 10v26M950 10v26" stroke="#636363" strokeWidth="2" />
  </Stretch>
);

const rulerLabels = ["0:20", "0:40", "1:00", "1:20", "1:40", "2:00", "2:20", "2:40", "3:00", "3:20"];

const transport = [
  ["停止", stopShape, true],
  ["播放", <PlayIcon />],
  ["暂停", pauseShape, true],
  ["转到开始", toStartShape],
  ["快退", rewindShape],
  ["快进", forwardShape],
  ["转到结尾", toEndShape],
  ["录制", recordShape],
  ["循环播放", <LoopIcon />],
  ["跳过所选项目", skipShape],
];

const zooms = [
  ["放大振幅", <ZoomVertical sign="+" />],
  ["缩小振幅", <ZoomVertical sign="-" />],
  ["放大时间", <ZoomHorizontal sign="+" />],
  ["缩小时间", <ZoomHorizontal sign="-" />, true],
  ["全部缩小", <ZoomFull />, true],
  ["放大入点", <ZoomEdge left />],
  ["放大出点", <ZoomEdge right />],
  ["缩放至选区", <ZoomEdge left right />],
  ["重置振幅", <ZoomVertical sign="+" bars />, true],
];

const Editor = () => (
  <Panel $flex="1" $focused>
    <TabRow>
      <TabButton $active $line $size="16px" $gap="18px" $color="#989898">
        编辑器 : stego100.wav
        <MenuIcon />
      </TabButton>
      <Tab>混音器</Tab>
    </TabRow>
    <Overview>
      <OverviewGraph />
      <OverviewButtons>
        <IconButton $off aria-label="全部缩小"><ZoomFull /></IconButton>
        <IconButton aria-label="列表"><ListIcon /></IconButton>
      </OverviewButtons>
    </Overview>
    <RulerRow>
      <Ruler>
        <RulerLabels>
          <RulerLabel $span={10}>hms</RulerLabel>
          {rulerLabels.map((t) => <RulerLabel key={t} $span={20}>{t}</RulerLabel>)}
          <RulerLabel $span={6} />
        </RulerLabels>
        <Stretch $height="11px" viewBox="2 0 943 11" preserveAspectRatio="none" shapeRendering="crispEdges">
          {Array.from({ length: 22 }, (_, i) => (
            <rect key={i} x={Math.round(timeX(i * 10)) - 1} y={i % 2 ? 5 : 0} width="2" height="11" fill={colors.text} />
          ))}
        </Stretch>
        <Mark style={{ left: `${(131 / TOTAL) * 100}%` }} />
        <Head style={{ left: `${(CURSOR / TOTAL) * 100}%` }} />
      </Ruler>
      <RulerSide>
        <SquareButton $height="32px" aria-label="对齐"><MagnetIcon /></SquareButton>
      </RulerSide>
    </RulerRow>
    <WaveRow>
      <WaveArea>
        <WaveGraph />
        <Hud>
          <HudGrip>
            <Icon w={4} h={16}>
              <path d="M1 0v16M3 0v16" stroke="#b0b0b0" strokeWidth="2" strokeDasharray="1 2" />
            </Icon>
          </HudGrip>
          <Icon w={23} h={22} color="#a8a8a8">
            <path d="M0 18h1v4H0zM3 17h1v5H3zM6 15h1v7H6zM9 14h1v8H9zM12 12h1v10h-1zM15 10h1v12h-1zM18 6h1v16h-1zM21 0h2v22h-2z" />
          </Icon>
          <Icon w={35} h={28}>
            <circle cx="20" cy="14" r="12" fill="none" stroke="#909090" strokeWidth="3" />
            <path d="M20 2v12" stroke="#909090" strokeWidth="3" />
          </Icon>
          <HudGain><BlueText>+0</BlueText> dB</HudGain>
          <BarLine $height="29px" $color="#555" $margin="0 6px 0 0" />
          <Icon w={13} h={15} color={colors.bright}>
            <path d="M8 0l5 5-3 1-1 3 1 3-4-3-5 6-1-1 5-6-3-3 3 0 2-2z" />
          </Icon>
        </Hud>
      </WaveArea>
      <Scale>
        <ScaleGraph />
        <ChannelButtons>
          <ChannelCell><SquareButton>L</SquareButton></ChannelCell>
          <ChannelCell><SquareButton>R</SquareButton></ChannelCell>
        </ChannelButtons>
      </Scale>
    </WaveRow>
    <Strip>
      <StripGrip />
      <Icon w={10} h={6}><path d="M5 0l5 5v1H0V5z" /></Icon>
    </Strip>
    <Transport>
      <Clock>0:12.736</Clock>
      {transport.map(([name, icon, off]) => (
        <TransportButton key={name} aria-label={name} $off={off}>{icon}</TransportButton>
      ))}
      <ZoomGroup>
        {zooms.map(([name, icon, off]) => (
          <TransportButton key={name} aria-label={name} $off={off}>{icon}</TransportButton>
        ))}
      </ZoomGroup>
    </Transport>
  </Panel>
);

/* ---------- essential sound ---------- */

const SoundNote = styled.div`
  flex: none;
  height: 39px;
  margin: 12px 0 17px;
  padding: 8px 0 0 17px;
  border: 2px solid #2c2c2c;
  border-width: 2px 0;
  font-size: 16px;
  color: ${colors.off};
`;

const SoundLabel = styled.div`
  margin-bottom: 27px;
  padding-left: 17px;
  color: ${colors.off};
`;

const TypeRow = styled.div`
  display: flex;
  flex: none;
  height: 35px;
  margin: 0 1px 36px 9px;
  overflow: hidden;
  border: 2px solid #2d2d2d;
  border-width: 2px 0 2px 1px;
`;

const TypeButton = styled.button`
  display: flex;
  align-items: center;
  justify-content: center;
  flex: none;
  gap: 9px;
  width: ${(p) => p.$width};
  border-right: 1px solid #2d2d2d;
  color: ${colors.off};
`;

const PresetRow = styled.div`
  display: flex;
  align-items: center;
  flex: none;
  margin-bottom: 22px;
  padding-left: 17px;
  color: ${colors.off};
`;

const PresetIcons = styled.div`
  display: flex;
  align-items: center;
  gap: 15px;
  margin-left: 2px;
`;

const Help = styled.p`
  margin: 0;
  padding-left: 17px;
  font-size: 16px;
  line-height: 20px;
  color: ${colors.off};
  white-space: nowrap;
`;

const helpLines = [
  "在多轨会话中选择一个或多个剪辑，使用",
  "上面的混合类型选择器指定混合类型（对",
  "话、音乐、声音效果或环境)。指定混合类",
  "型会显示一组目标控件，这些控件常用于",
  "增强该类型的音频元素。",
  "指定混合类型后，可通过每个参数选择预",
  "设或步骤来自定义您的混音。",
];

const EssentialSound = () => (
  <Panel $width="342px">
    <TabRow><Tab active line={false} gap="20px">“基本声音”</Tab></TabRow>
    <SoundNote>未选定剪辑</SoundNote>
    <SoundLabel>指定混合类型</SoundLabel>
    <TypeRow>
      <TypeButton $width="91px">
        <Icon w={20} h={21}><path d="M2 0h16l2 2v12l-2 2H9l-4 5v-5H2l-2-2V2z" /></Icon>
        对话
      </TypeButton>
      <TypeButton $width="91px">
        <Icon w={19} h={20}><path d="M6 3l12-3v14q0 3-4 4-4 0-3-3 1-3 5-2V5L8 7v10q0 3-4 3-5 0-4-3 2-3 6-2z" /></Icon>
        音乐
      </TypeButton>
      <TypeButton $width="86px">
        <Icon w={22} h={22}>
          <path d="M11 0l2 6 5-4-2 6 6 1-5 3 5 4-6-1 1 6-5-4-2 5-2-5-5 3 2-6-5 1 4-4-4-3 6 0-2-6 5 4z" />
        </Icon>
        SFX
      </TypeButton>
      <TypeButton $width="88px">
        <Icon w={20} h={21}>
          <path d="M19 5q2 11-6 16H8l5-11-6 9Q3 10 19 5z" />
          <path d="M1 10Q0 3 8 1M5 11Q5 6 10 5" fill="none" stroke="currentColor" strokeWidth="2" />
        </Icon>
        环境
      </TypeButton>
    </TypeRow>
    <PresetRow>
      <FieldLabel htmlFor="preset" $width="49px">预设 :</FieldLabel>
      <SelectBox $width="180px" $off>
        <Select id="preset" disabled />
        <ChevronDown />
      </SelectBox>
      <PresetIcons>
        <IconButton $off aria-label="存储预设"><DriveArrowIcon /></IconButton>
        <IconButton $off aria-label="删除预设"><TrashIcon /></IconButton>
      </PresetIcons>
    </PresetRow>
    <Help>
      {helpLines.map((l) => <React.Fragment key={l}>{l}<br /></React.Fragment>)}
    </Help>
  </Panel>
);

/* ---------- levels and selection ---------- */

const Meter = styled.div`
  display: flex;
  flex: none;
  height: 89px;
  margin: 10px 8px 0 7px;
  border: 2px solid #000;
  background: ${colors.well};
`;

const MeterBar = styled.div`
  flex: 1;
  margin-left: 1px;
  border-left: 2px solid #f2ee1c;
  border-right: 2px solid #000;
`;

const ClipLights = styled.div`
  width: 13px;
  display: flex;
  flex-direction: column;
`;

const ClipLight = styled.span`
  flex: 1;
  & + & {
    border-top: 2px solid #000;
  }
`;

const MeterTicks = styled.div`
  display: flex;
  flex: none;
  height: 6px;
  margin: 0 25px 0 10px;
`;

const MeterLabels = styled.div`
  display: flex;
  justify-content: space-between;
  padding: 0 25px 0 12px;
  font-size: 14px;
`;

const MeterLabel = styled.span`
  display: flex;
  justify-content: center;
  width: 0;
  white-space: nowrap;
  &:first-child {
    justify-content: flex-start;
    margin: 0 4px 0 -4px;
  }
`;

const meterLabels = Array.from({ length: 21 }, (_, i) => (i === 0 ? "dB" : String(i * 3 - 60)));

const Levels = () => (
  <Panel $flex="1">
    <TabRow><Tab active line={false}>电平</Tab></TabRow>
    <Meter>
      <MeterBar />
      <ClipLights><ClipLight /><ClipLight /></ClipLights>
    </Meter>
    <MeterTicks>
      <Stretch viewBox="0 0 993 6" preserveAspectRatio="none" shapeRendering="crispEdges">
        {Array.from({ length: 61 }, (_, i) => (
          <rect key={i} x={Math.round((i * 991) / 60)} y="0" width="2" height={i % 3 ? 3 : 6} fill={colors.text} />
        ))}
      </Stretch>
    </MeterTicks>
    <MeterLabels>
      {meterLabels.map((l) => <MeterLabel key={l}>{l}</MeterLabel>)}
    </MeterLabels>
  </Panel>
);

const RangeTable = styled.table`
  table-layout: fixed;
  width: 360px;
  margin: 4px 0 0 16px;
  border-collapse: collapse;
`;

const RangeHead = styled.th`
  width: ${(p) => p.$width || "auto"};
  height: 32px;
  padding: 0 0 ${(p) => (p.scope ? "3px" : "0")};
  font-size: 17px;
  font-weight: 400;
  text-align: left;
`;

const RangeCell = styled.td`
  padding: 1px 0 0 2px;
  color: ${colors.blue};
`;

const ranges = [
  ["选区", "0:12.736", "0:12.736", "0:00.000"],
  ["视图", "0:00.000", "3:36.737", "3:36.737"],
];

const SelectionView = () => (
  <Panel $width="393px">
    <TabRow><Tab active line={false}>选区 / 视图</Tab></TabRow>
    <RangeTable>
      <thead>
        <tr>
          <RangeHead $width="65px" />
          <RangeHead $width="104px">开始</RangeHead>
          <RangeHead $width="103px">结束</RangeHead>
          <RangeHead>持续时间</RangeHead>
        </tr>
      </thead>
      <tbody>
        {ranges.map(([name, ...values]) => (
          <tr key={name}>
            <RangeHead scope="row">{name}</RangeHead>
            {values.map((v, i) => <RangeCell key={i}>{v}</RangeCell>)}
          </tr>
        ))}
      </tbody>
    </RangeTable>
  </Panel>
);

/* ---------- status bar ---------- */

const StatusBar = styled.footer`
  position: relative;
  display: flex;
  align-items: center;
  flex: none;
  height: 30px;
  margin-top: 3px;
  padding: 0 73px 0 13px;
  background: ${colors.panel};
  border-bottom: 2px solid #050505;
  white-space: nowrap;
`;

const StatusText = styled.span`
  flex: 1;
`;

const StatusCell = styled.span`
  width: ${(p) => p.$width};
  height: 20px;
  padding-left: ${(p) => p.$left || "13px"};
  border-left: 1px solid #333;
`;

const Dot = styled.span`
  font-family: "DejaVu Sans", sans-serif;
  font-size: 12px;
  line-height: 12px;
`;

const Credit = styled.span`
  position: absolute;
  right: 10px;
  top: 1px;
  font-family: "Liberation Sans", sans-serif;
  font-size: 16px;
  color: rgba(225, 225, 225, 0.85);
`;

const Status = () => (
  <StatusBar>
    <StatusText>已停止</StatusText>
    <StatusCell $width="75px" />
    <StatusCell $width="171px" />
    <StatusCell $width="217px">44100 Hz <Dot>●</Dot> 16 位 <Dot>●</Dot> 立体声</StatusCell>
    <StatusCell $width="92px">36.46 MB</StatusCell>
    <StatusCell $width="97px" $left="26px">3:36.737</StatusCell>
    <StatusCell $width="125px">52.48 GB 空闲</StatusCell>
    <StatusCell $width="1px" $left="0" />
    <Credit>https://blog.csdn.net/MikeCoke</Credit>
  </StatusBar>
);

/* ---------- page ---------- */

const Page = styled.div`
  display: flex;
  flex-direction: column;
  min-height: 100vh;
`;

const Workspace = styled.main`
  display: flex;
  flex: 1;
  gap: 6px;
  padding: 0 2px;
`;

const MainColumn = styled.div`
  display: flex;
  flex-direction: column;
  flex: 1;
  gap: 6px;
  min-width: 0;
`;

const PanelRow = styled.div`
  display: flex;
  gap: 6px;
  flex: ${(p) => p.$flex || "none"};
  height: ${(p) => p.$height || "auto"};
`;

export default function App() {
  return (
    <Page>
      <GlobalStyle />
      <TopBars />
      <Workspace>
        <LeftColumn>
          <FilesPanel />
          <MediaPanel />
          <Panel $height="43px">
            <TabRow>
              <Tab active>历史记录</Tab>
              <Tab>视频</Tab>
            </TabRow>
          </Panel>
        </LeftColumn>
        <MainColumn>
          <PanelRow $flex="1">
            <Editor />
            <EssentialSound />
          </PanelRow>
          <PanelRow $height="168px">
            <Levels />
            <SelectionView />
          </PanelRow>
        </MainColumn>
      </Workspace>
      <Status />
    </Page>
  );
}
